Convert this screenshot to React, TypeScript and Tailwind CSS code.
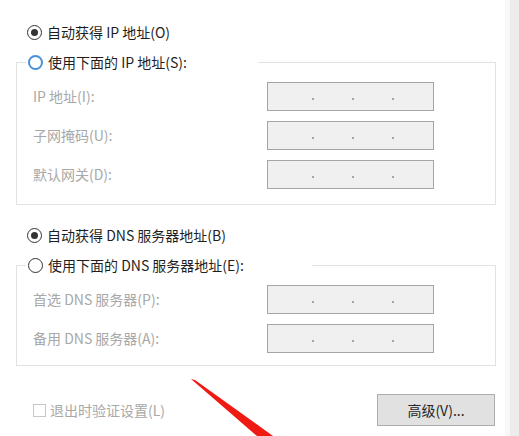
import type { ReactNode } from 'react';

const font = { fontFamily: '"Noto Sans CJK SC", "Noto Sans", sans-serif' };

function Radio({ checked, focused, label }: { checked?: boolean; focused?: boolean; label: string }) {
  return (
    <div className="flex h-5 items-center gap-[5px] text-[14px] text-[#1f1f1f]">
      <span
        className={`flex h-[15px] w-[15px] items-center justify-center rounded-full ${
          focused ? 'border-2 border-[#4a90d9]' : 'border border-[#333333]'
        }`}
      >
        {checked && <span className="h-[7px] w-[7px] rounded-full bg-[#333333]" />}
      </span>
      <span className="leading-none">{label}</span>
    </div>
  );
}

function IpBox() {
  return (
    <div className="flex h-[29px] w-[167px] items-center gap-[38px] border border-[#a5a5a5] bg-[#f0f0f0] pl-[44px] pt-[5px]">
      <span className="h-[2px] w-[2px] rounded-full bg-[#8c8c8c]" />
      <span className="h-[2px] w-[2px] rounded-full bg-[#8c8c8c]" />
      <span className="h-[2px] w-[2px] rounded-full bg-[#8c8c8c]" />
    </div>
  );
}

function Row({ label }: { label: string }) {
  return (
    <div className="flex items-center">
      <span className="w-[250px] pl-[16px] text-[14px] text-[#a8a8a8]">{label}</span>
      <IpBox />
    </div>
  );
}

function Group({ legend, legendWidth, children }: { legend: ReactNode; legendWidth: string; children: ReactNode }) {
  return (
    <fieldset className="ml-[16px] w-[480px] border border-[#e2e2e2]">
      <legend className={`ml-[9px] bg-white pl-[2px] ${legendWidth}`}>{legend}</legend>
      {children}
    </fieldset>
  );
}

export default function App() {
  return (
    <div className="relative flex h-[436px] w-[519px] overflow-hidden bg-white" style={font}>
      <div className="flex w-[505px] flex-col pt-[22px]">
        <div className="pl-[27px]">
          <Radio checked label="自动获得 IP 地址(O)" />
        </div>

        <div className="mt-[10px]">
          <Group legendWidth="w-[232px]" legend={<Radio focused label="使用下面的 IP 地址(S):" />}>
            <div className="flex flex-col gap-[10px] pb-[15px] pt-[10px]">
              <Row label="IP 地址(I):" />
              <Row label="子网掩码(U):" />
              <Row label="默认网关(D):" />
            </div>
          </Group>
        </div>

        <div className="mt-[20px] pl-[27px]">
          <Radio checked label="自动获得 DNS 服务器地址(B)" />
        </div>

        <div className="mt-[10px]">
          <Group legendWidth="w-[286px]" legend={<Radio label="使用下面的 DNS 服务器地址(E):" />}>
            <div className="flex flex-col gap-[10px] pb-[12px] pt-[10px]">
              <Row label="首选 DNS 服务器(P):" />
              <Row label="备用 DNS 服务器(A):" />
            </div>
          </Group>
        </div>

        <div className="mt-[28px] flex items-center justify-between pl-[33px] pr-[10px]">
          <div className="flex items-center gap-[4px] text-[14px] text-[#a8a8a8]">
            <span className="h-[13px] w-[13px] border border-[#c8c8c8]" />
            <span>退出时验证设置(L)</span>
          </div>
          <button className="h-[32px] w-[118px] border border-[#adadad] bg-[#e1e1e1] text-[14px] text-[#262626]">
            高级(V)...
          </button>
        </div>
      </div>
      <div className="w-[5px] bg-[#f8f8f8]" />
      <div className="w-[9px] bg-[#ececec]" />

      <svg className="absolute left-0 top-0" width="519" height="436" viewBox="0 0 519 436">
        <polygon points="191,379 195,380 273,436 257,436" fill="#f01a14" />
      </svg>
    </div>
  );
}
